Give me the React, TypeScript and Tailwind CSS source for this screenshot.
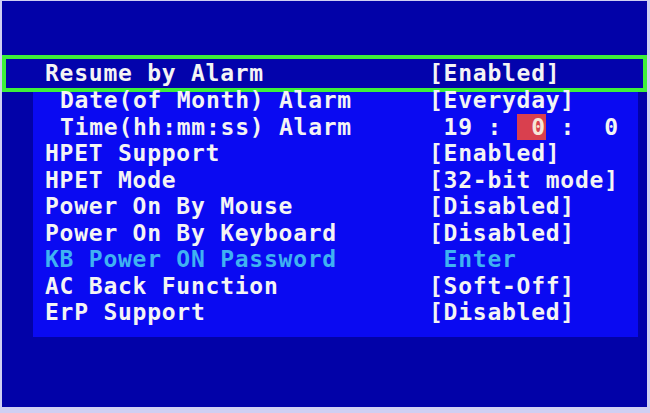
const rows: { label: string; value: React.ReactNode; indent?: boolean; cyan?: boolean }[] = [
  { label: "Date(of Month) Alarm", value: "[Everyday]", indent: true },
  {
    label: "Time(hh:mm:ss) Alarm",
    indent: true,
    value: (
      <>
        {" 19 : "}
        <span className="bg-[#d9404e] text-[#f6e6d8]">{" 0"}</span>
        {" :  0"}
      </>
    ),
  },
  { label: "HPET Support", value: "[Enabled]" },
  { label: "HPET Mode", value: "[32-bit mode]" },
  { label: "Power On By Mouse", value: "[Disabled]" },
  { label: "Power On By Keyboard", value: "[Disabled]" },
  { label: "KB Power ON Password", value: " Enter", cyan: true },
  { label: "AC Back Function", value: "[Soft-Off]" },
  { label: "ErP Support", value: "[Disabled]" },
];

function Row({ label, value, indent, cyan }: { label: string; value: React.ReactNode; indent?: boolean; cyan?: boolean }) {
  return (
    <div className={`flex h-[26.5px] leading-[26.5px] whitespace-pre ${cyan ? "text-[#3fb2f2]" : "text-[#f4f4f4]"}`}>
      <div className={`w-[384px] ${indent ? "pl-[15px]" : ""}`}>{label}</div>
      <div>{value}</div>
    </div>
  );
}

export default function App() {
  return (
    <div className="w-[650px] h-[413px] bg-[#cfcff2] pt-px pl-[2px] pr-[3px] pb-[6px] font-['DejaVu_Sans_Mono',monospace] font-bold text-[23px] tracking-[0.75px]">
      <div className="h-full bg-[#0202a8] flex flex-col">
        <div className="h-[54px]" />
        <div className="h-[37px] border-4 border-[#3ef03a] bg-[#0303ac] flex items-center pl-[39px]">
          <Row label="Resume by Alarm" value="[Enabled]" />
        </div>
        <div className="ml-[31px] w-[605px] h-[245px] bg-[#0a0af2] pl-[12px]">
          <div className="-mt-[5px]">
            {rows.map((r) => (
              <Row key={r.label} {...r} />
            ))}
          </div>
        </div>
      </div>
    </div>
  );
}
